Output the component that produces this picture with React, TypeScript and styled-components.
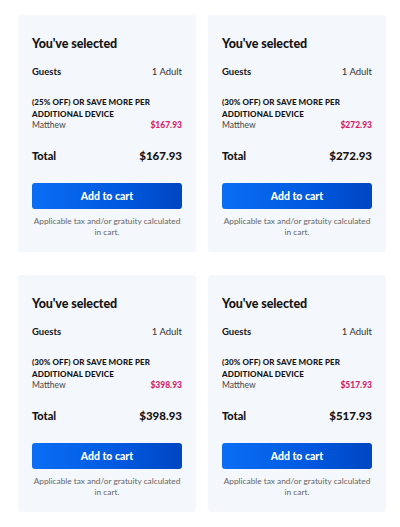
import styled, { createGlobalStyle } from "styled-components";

type Selection = {
  discount: string;
  price: string;
};

const selections: Selection[] = [
  { discount: "25%", price: "$167.93" },
  { discount: "30%", price: "$272.93" },
  { discount: "30%", price: "$398.93" },
  { discount: "30%", price: "$517.93" },
];

const GlobalStyle = createGlobalStyle`
  *, *::before, *::after {
    margin: 0;
    padding: 0;
    box-sizing: border-box;
  }

  html, body {
    width: 100%;
    height: 100%;
    background: #ffffff;
    font-family: Lato, "Noto Sans", Arial, sans-serif;
    -webkit-font-smoothing: antialiased;
  }
`;

const Page = styled.div`
  display: grid;
  grid-template-columns: 178px 178px;
  column-gap: 12px;
  row-gap: 23px;
  padding: 15px 0 0 18px;
`;

const Card = styled.div`
  background: #f4f7fb;
  border-radius: 3px;
  padding: 21px 14px 14px;
  display: flex;
  flex-direction: column;
  color: #141414;
`;

const Heading = styled.h2`
  font-size: 12.5px;
  line-height: 16px;
  font-weight: 900;
  letter-spacing: -0.1px;
`;

const Row = styled.div<{ $top?: number }>`
  display: flex;
  justify-content: space-between;
  align-items: center;
  margin-top: ${(p) => p.$top ?? 0}px;
`;

const Label = styled.span`
  font-size: 9.5px;
  line-height: 14px;
  font-weight: 700;
`;

const Value = styled.span`
  font-size: 9.5px;
  line-height: 14px;
  font-weight: 400;
  color: #333;
`;

const Offer = styled.div`
  margin-top: 17px;
  font-size: 8px;
  line-height: 12px;
  font-weight: 900;
  text-transform: uppercase;
  letter-spacing: 0.1px;
`;

const Name = styled.span`
  font-size: 8.5px;
  line-height: 11px;
  color: #444;
`;

const Price = styled.span`
  font-size: 8.5px;
  line-height: 11px;
  font-weight: 900;
  color: #d81f6b;
`;

const TotalLabel = styled.span`
  font-size: 11px;
  line-height: 18px;
  font-weight: 900;
`;

const TotalValue = styled.span`
  font-size: 11.5px;
  line-height: 18px;
  font-weight: 900;
`;

const CartButton = styled.button`
  margin-top: 18px;
  height: 26px;
  width: 100%;
  border: none;
  border-radius: 3px;
  background: linear-gradient(90deg, #0a6ef5 0%, #0058de 60%, #0046c2 100%);
  color: #fff;
  font-family: inherit;
  font-size: 10.5px;
  font-weight: 900;
  cursor: pointer;
`;

const Note = styled.p`
  margin-top: 7px;
  font-size: 8.3px;
  line-height: 11px;
  color: #666;
  text-align: center;
  white-space: nowrap;
`;

export default function App() {
  return (
    <>
      <GlobalStyle />
      <Page>
        {selections.map((s, i) => (
          <Card key={i}>
            <Heading>You've selected</Heading>
            <Row $top={13}>
              <Label>Guests</Label>
              <Value>1 Adult</Value>
            </Row>
            <Offer>
              ({s.discount} OFF) OR SAVE MORE PER
              <br />
              ADDITIONAL DEVICE
            </Offer>
            <Row>
              <Name>Matthew</Name>
              <Price>{s.price}</Price>
            </Row>
            <Row $top={16}>
              <TotalLabel>Total</TotalLabel>
              <TotalValue>{s.price}</TotalValue>
            </Row>
            <CartButton>Add to cart</CartButton>
            <Note>
              Applicable tax and/or gratuity calculated
              <br />
              in cart.
            </Note>
          </Card>
        ))}
      </Page>
    </>
  );
}
